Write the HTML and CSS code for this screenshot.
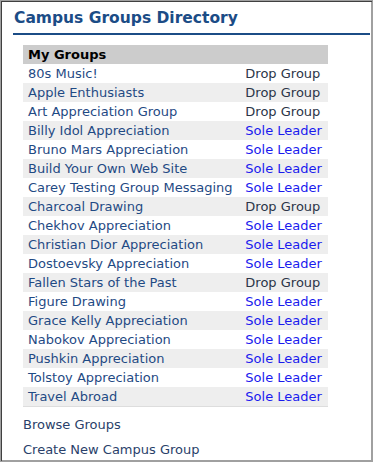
FILE: index.html
```html
<!DOCTYPE html>
<html lang="en">

<head>
    <meta charset="UTF-8">
    <title>Campus Groups Directory</title>
    <link rel="stylesheet" href="styles.css">
</head>

<body>
    <div class="panel">
        <h1 class="title">Campus Groups Directory</h1>

        <div class="content">
            <table class="groups">
                <thead>
                    <tr>
                        <th colspan="2">My Groups</th>
                    </tr>
                </thead>
                <tbody>
                    <tr><td><a class="group" href="#">80s Music!</a></td><td><a class="drop" href="#">Drop Group</a></td></tr>
                    <tr><td><a class="group" href="#">Apple Enthusiasts</a></td><td><a class="drop" href="#">Drop Group</a></td></tr>
                    <tr><td><a class="group" href="#">Art Appreciation Group</a></td><td><a class="drop" href="#">Drop Group</a></td></tr>
                    <tr><td><a class="group" href="#">Billy Idol Appreciation</a></td><td><a class="leader" href="#">Sole Leader</a></td></tr>
                    <tr><td><a class="group" href="#">Bruno Mars Appreciation</a></td><td><a class="leader" href="#">Sole Leader</a></td></tr>
                    <tr><td><a class="group" href="#">Build Your Own Web Site</a></td><td><a class="leader" href="#">Sole Leader</a></td></tr>
                    <tr><td><a class="group" href="#">Carey Testing Group Messaging</a></td><td><a class="leader" href="#">Sole Leader</a></td></tr>
                    <tr><td><a class="group" href="#">Charcoal Drawing</a></td><td><a class="drop" href="#">Drop Group</a></td></tr>
                    <tr><td><a class="group" href="#">Chekhov Appreciation</a></td><td><a class="leader" href="#">Sole Leader</a></td></tr>
                    <tr><td><a class="group" href="#">Christian Dior Appreciation</a></td><td><a class="leader" href="#">Sole Leader</a></td></tr>
                    <tr><td><a class="group" href="#">Dostoevsky Appreciation</a></td><td><a class="leader" href="#">Sole Leader</a></td></tr>
                    <tr><td><a class="group" href="#">Fallen Stars of the Past</a></td><td><a class="drop" href="#">Drop Group</a></td></tr>
                    <tr><td><a class="group" href="#">Figure Drawing</a></td><td><a class="leader" href="#">Sole Leader</a></td></tr>
                    <tr><td><a class="group" href="#">Grace Kelly Appreciation</a></td><td><a class="leader" href="#">Sole Leader</a></td></tr>
                    <tr><td><a class="group" href="#">Nabokov Appreciation</a></td><td><a class="leader" href="#">Sole Leader</a></td></tr>
                    <tr><td><a class="group" href="#">Pushkin Appreciation</a></td><td><a class="leader" href="#">Sole Leader</a></td></tr>
                    <tr><td><a class="group" href="#">Tolstoy Appreciation</a></td><td><a class="leader" href="#">Sole Leader</a></td></tr>
                    <tr><td><a class="group" href="#">Travel Abroad</a></td><td><a class="leader" href="#">Sole Leader</a></td></tr>
                </tbody>
            </table>

            <ul class="actions">
                <li><a href="#">Browse Groups</a></li>
                <li><a href="#">Create New Campus Group</a></li>
            </ul>
        </div>
    </div>
</body>

</html>
```

FILE: styles.css
```css
* {
    box-sizing: border-box;
}

body {
    margin: 0;
    background-color: #ffffff;
    font-family: 'DejaVu Sans', Verdana, sans-serif;
    font-size: 13px;
}

.panel {
    height: 100vh;
    border: 1px solid #a0a0a0;
    /* marco hundido: arriba/izquierda oscuro */
    box-shadow: inset 1px 1px 0 #404040, inset -1px -1px 0 #a0a0a0;
    padding: 2px 2px 0 12px;
    overflow: hidden;
}

.title {
    margin: 0;
    padding: 5px 0 5px 1px;
    font-size: 15.5px;
    font-weight: bold;
    color: #1b4c86;
    border-bottom: 2px solid #1b4c86;
    line-height: 20px;
}

.content {
    padding: 10px 0 0 10px;
}

.groups {
    width: 305px;
    border-collapse: collapse;
    border-bottom: 1px solid #dddddd;
}

.groups th {
    background-color: #cccccc;
    color: #000000;
    text-align: left;
    font-weight: bold;
    padding: 0 5px;
    height: 19px;
    line-height: 19px;
}

.groups td {
    padding: 0 5px;
    height: 19px;
    line-height: 19px;
    white-space: nowrap;
}

.groups tbody tr:nth-child(even) {
    background-color: #eeeeee;
}

.groups a {
    text-decoration: none;
}

.group {
    color: #1f4a84;
}

.drop {
    color: #2b3548;
}

.leader {
    color: #1a1aee;
}

.actions {
    list-style: none;
    margin: 0;
    padding: 0;
}

.actions li {
    margin-top: 10px;
    line-height: 15px;
}

.actions a {
    color: #2a3f6a;
    text-decoration: none;
}
```
